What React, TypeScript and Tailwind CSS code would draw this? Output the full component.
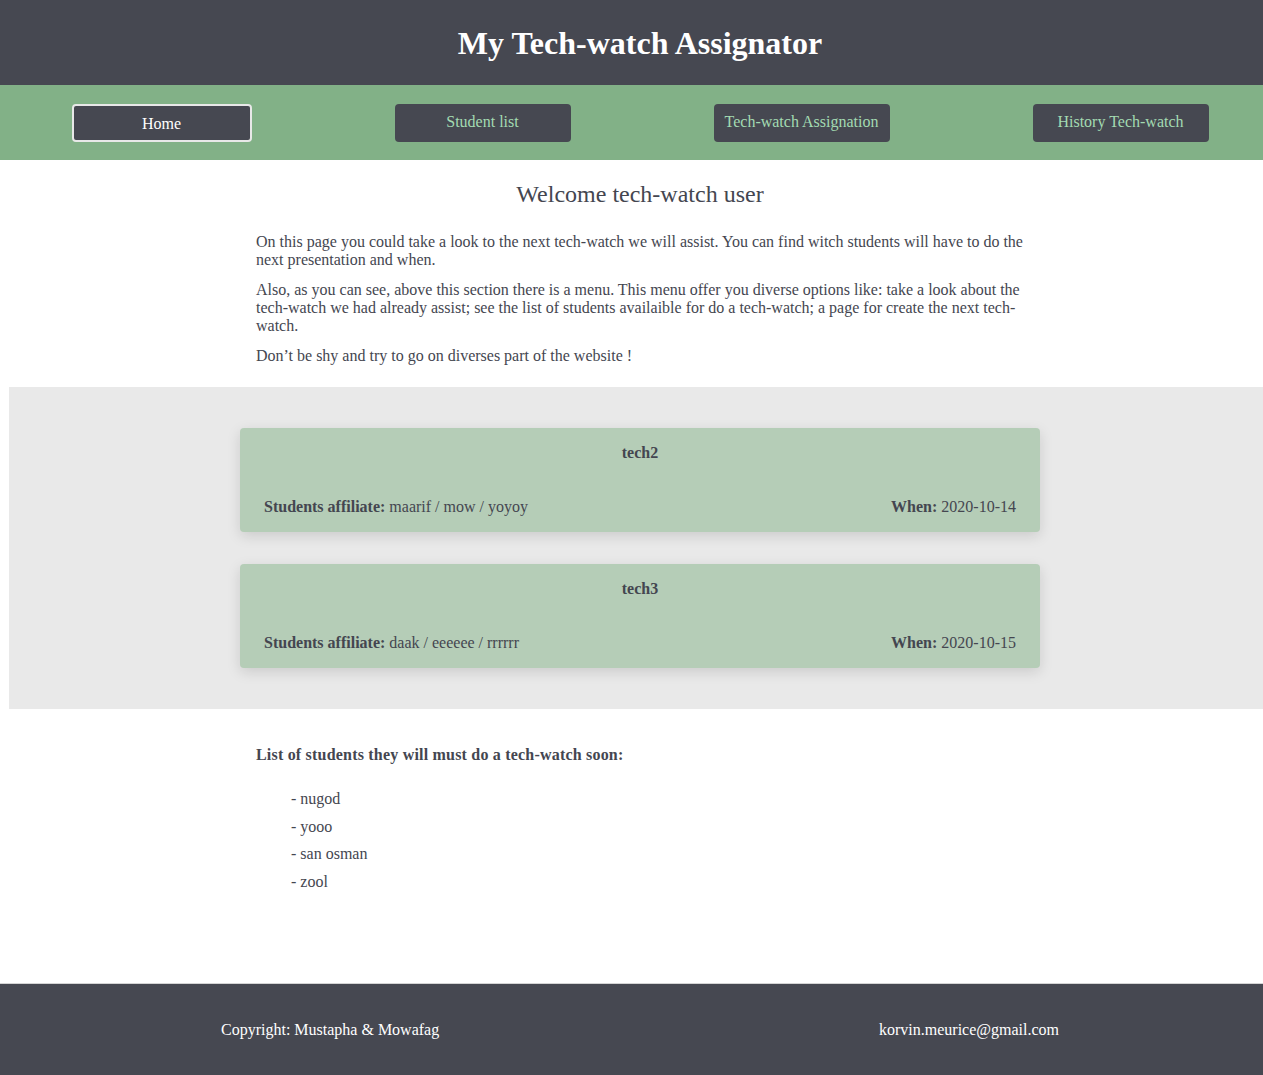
const navItems = [
  { label: "Home", active: true },
  { label: "Student list" },
  { label: "Tech-watch Assignation" },
  { label: "History Tech-watch" },
];

const techWatches = [
  { name: "tech2", students: ["maarif", "mow", "yoyoy"], date: "2020-10-14" },
  { name: "tech3", students: ["daak", "eeeeee", "rrrrrr"], date: "2020-10-15" },
];

const nextStudents = ["nugod", "yooo", "san osman", "zool"];

const App = () => {
  return (
    <div className="w-full overflow-hidden">
      <div className="min-h-[1075px] w-[1280px] flex flex-col bg-white font-['Liberation_Serif',serif] text-[#444650]">
        <header className="flex h-[85px] items-center justify-center bg-[#464851]">
          <h1 className="text-[32px] font-bold text-white">My Tech-watch Assignator</h1>
        </header>
        <nav className="flex h-[75px] items-center justify-around bg-[#82b187]">
          {navItems.map((item) => (
            <NavButton key={item.label} label={item.label} active={item.active} />
          ))}
        </nav>
        <main className="flex grow flex-col">
          <section className="mx-auto w-[800px] px-4 pt-4">
            <h2 className="mb-[21px] text-center text-[24px]">Welcome tech-watch user</h2>
            <p className="mb-3 text-[16px] leading-[18px]">
              On this page you could take a look to the next tech-watch we will assist. You can find witch students
              will have to do the next presentation and when.
            </p>
            <p className="mb-3 text-[16px] leading-[18px]">
              Also, as you can see, above this section there is a menu. This menu offer you diverse options like: take
              a look about the tech-watch we had already assist; see the list of students availaible for do a
              tech-watch; a page for create the next tech-watch.
            </p>
            <p className="text-[16px] leading-[18px]">Don’t be shy and try to go on diverses part of the website !</p>
          </section>
          <section className="mx-[9px] mt-[22px] flex flex-col items-center gap-[32px] bg-[#e9e9e9] py-[41px]">
            {techWatches.map((tw) => (
              <Card key={tw.name} {...tw} />
            ))}
          </section>
          <section className="mx-auto w-[800px] px-4 pt-[34px]">
            <h3 className="text-[16px] font-bold tracking-[0.2px]">
              List of students they will must do a tech-watch soon:
            </h3>
            <ul className="mt-[23px] flex flex-col gap-[9px] pl-[35px] text-[16px] leading-[18.5px]">
              {nextStudents.map((s) => (
                <li key={s}>- {s}</li>
              ))}
            </ul>
          </section>
        </main>
        <footer className="flex h-[92px] items-center justify-between border-t border-[#d4d4d4] bg-[#464851] px-[221px] text-[16px] text-white">
          <span>Copyright: Mustapha &amp; Mowafag</span>
          <span>korvin.meurice@gmail.com</span>
        </footer>
      </div>
    </div>
  );
};

type NavButtonProps = {
  label: string;
  active?: boolean;
};

const NavButton = ({ label, active }: NavButtonProps) => {
  return (
    <button
      className={
        active
          ? "flex h-[38px] w-[180px] items-center justify-center rounded-[4px] border-2 border-[#e8e8e8] bg-[#464851] pt-[2px] text-[16px] text-white"
          : "flex h-[38px] w-[176px] items-center justify-center rounded-[4px] bg-[#464851] pb-[1px] text-[16px] text-[#a3dbb1]"
      }
    >
      {label}
    </button>
  );
};

type CardProps = {
  name: string;
  students: string[];
  date: string;
};

const Card = ({ name, students, date }: CardProps) => {
  return (
    <div className="flex h-[104px] w-[800px] flex-col rounded-[4px] bg-[#b5cdb7] px-6 pt-[13px] shadow-[0_4px_14px_rgba(0,0,0,0.13)]">
      <div className="text-center text-[16px] font-bold">{name}</div>
      <div className="mt-[30px] flex justify-between text-[16px]">
        <span>
          <b>Students affiliate:</b> {students.join(" / ")}
        </span>
        <span>
          <b>When:</b> {date}
        </span>
      </div>
    </div>
  );
};

export default App;
